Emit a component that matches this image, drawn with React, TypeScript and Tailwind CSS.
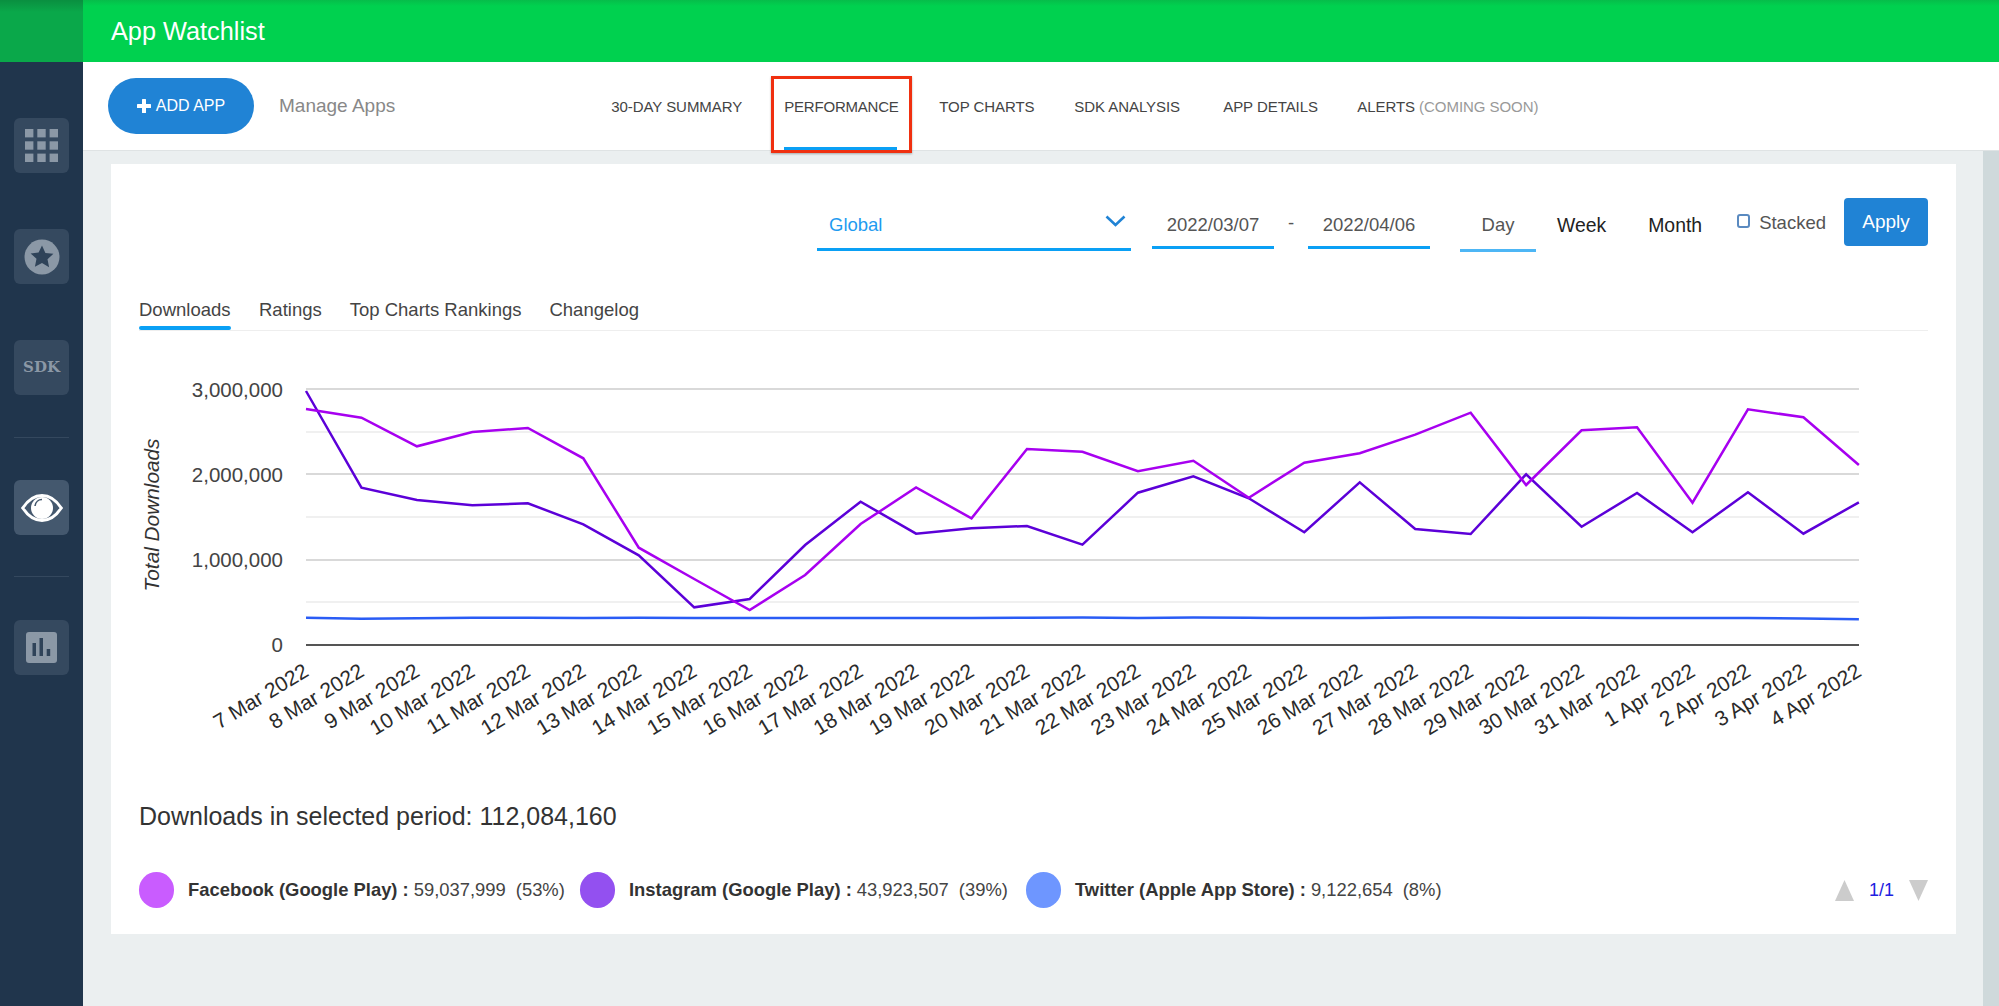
import React from "react";

const font = { fontFamily: '"Liberation Sans", Arial, sans-serif' };

const STEP = 55.46;
const pink = [409, 417.7, 446.3, 432, 428, 458.3, 547.7, 579, 610, 575, 524, 487.5, 518.3, 449, 451.7, 471.3, 460.7, 497.7, 462.7, 453.3, 434.7, 412.7, 485, 430.3, 427.3, 502.7, 409.3, 417.3, 465];
const purple = [391, 487.7, 500, 505.3, 503.3, 524.3, 555.3, 607.3, 599, 545, 501.7, 533.7, 528.3, 526, 544.7, 492.7, 476.3, 498.3, 532.3, 482.3, 529, 534, 474.3, 526.7, 493, 532.3, 492.3, 533.7, 502.3];
const blue = [617.7, 618.7, 618.2, 617.7, 617.7, 617.9, 617.7, 618, 618, 618, 618, 618, 618, 617.7, 617.5, 618, 617.6, 617.8, 618, 618, 617.6, 617.6, 617.7, 617.7, 618, 618, 618, 618.4, 619.3];
const days = ["7 Mar 2022", "8 Mar 2022", "9 Mar 2022", "10 Mar 2022", "11 Mar 2022", "12 Mar 2022", "13 Mar 2022", "14 Mar 2022", "15 Mar 2022", "16 Mar 2022", "17 Mar 2022", "18 Mar 2022", "19 Mar 2022", "20 Mar 2022", "21 Mar 2022", "22 Mar 2022", "23 Mar 2022", "24 Mar 2022", "25 Mar 2022", "26 Mar 2022", "27 Mar 2022", "28 Mar 2022", "29 Mar 2022", "30 Mar 2022", "31 Mar 2022", "1 Apr 2022", "2 Apr 2022", "3 Apr 2022", "4 Apr 2022"];

const pts = (a: number[]) => a.map((y, i) => `${306 + i * STEP},${y}`).join(" ");

function Chart() {
  return (
    <svg width={1845} height={420} viewBox="111 360 1845 420" className="block shrink-0" style={font}>
      <text transform="translate(159 515) rotate(-90)" textAnchor="middle" fontSize="20.8" fontStyle="italic" fill="#333">Total Downloads</text>
      {[432, 517, 602].map((y) => (
        <line key={y} x1="306" x2="1859" y1={y} y2={y} stroke="#f0f0f0" strokeWidth="2" />
      ))}
      {[389, 474, 560].map((y) => (
        <line key={y} x1="306" x2="1859" y1={y} y2={y} stroke="#d9d9d9" strokeWidth="2" />
      ))}
      <line x1="306" x2="1859" y1="645" y2="645" stroke="#555" strokeWidth="2" />
      {[["3,000,000", 397], ["2,000,000", 481.500], ["1,000,000", 567], ["0", 652]].map(([t, y]) => (
        <text key={t} x="283" y={y} textAnchor="end" fontSize="20.5" fill="#444">{t}</text>
      ))}
      {days.map((d, i) => (
        <text key={d} transform={`translate(${306 + i * STEP + 4} 675) rotate(-31)`} textAnchor="end" fontSize="21" fill="#2a2a2a">{d}</text>
      ))}
      <polyline points={pts(blue)} fill="none" stroke="#2a5cf5" strokeWidth="2.5" />
      <polyline points={pts(purple)} fill="none" stroke="#5c00d8" strokeWidth="2.5" />
      <polyline points={pts(pink)} fill="none" stroke="#a700f0" strokeWidth="2.5" />
    </svg>
  );
}

function Side({ active, children }: { active?: boolean; children: React.ReactNode }) {
  return (
    <div className={`w-[55px] h-[55px] rounded-md flex items-center justify-center ${active ? "bg-[#44586e]" : "bg-[#35495f]"}`}>
      {children}
    </div>
  );
}

function Sidebar() {
  return (
    <div className="w-[83px] shrink-0 bg-[#20354c] flex flex-col">
      <div className="h-[62px] bg-[linear-gradient(#0a8f40,#0aa84a_12px,#0aa84a)]" />
      <div className="flex flex-col items-center pt-[56px]">
        <Side>
          <svg width="33" height="33" viewBox="0 0 33 33" fill="#8b98a6">
            {[0, 12.3, 24.6].flatMap((y) => [0, 12.3, 24.6].map((x) => <rect key={`${x}-${y}`} x={x} y={y} width="8.4" height="8.4" />))}
          </svg>
        </Side>
        <div className="h-[56px]" />
        <Side>
          <svg width="36" height="36" viewBox="0 0 36 36">
            <circle cx="18" cy="18" r="17.5" fill="#8b98a6" />
            <path d="M18 6.5l3.4 7.4 8 .9-5.9 5.4 1.6 8L18 24l-7.1 3.8 1.6-8-5.9-5.4 8-.9z" fill="#2f4359" />
          </svg>
        </Side>
        <div className="h-[56px]" />
        <Side>
          <span className="text-[#8b98a6] text-[15px] font-bold" style={{ fontFamily: '"DejaVu Serif", serif' }}>SDK</span>
        </Side>
        <div className="h-[43px] w-[55px] flex items-end"><div className="w-full h-px bg-[#34485e]" /></div>
        <div className="h-[42px]" />
        <Side active>
          <svg width="42" height="28" viewBox="0 0 42 28">
            <path d="M1.7 14C7 6 13.500 1.500 21 1.500S35 6 40.300 14C35 22 28.500 26.500 21 26.500S7 22 1.700 14z" fill="none" stroke="#fff" strokeWidth="3" />
            <circle cx="21" cy="14" r="11" fill="#fff" />
            <path d="M14 12c.5-4 3.500-6.500 7-6.500" fill="none" stroke="#44586e" strokeWidth="1.6" />
          </svg>
        </Side>
        <div className="h-[42px] w-[55px] flex items-end"><div className="w-full h-px bg-[#34485e]" /></div>
        <div className="h-[43px]" />
        <Side>
          <svg width="31" height="31" viewBox="0 0 31 31">
            <rect width="31" height="31" rx="3" fill="#8b98a6" />
            <rect x="6.500" y="11" width="3.500" height="13" fill="#2f4359" />
            <rect x="13.500" y="6" width="3.500" height="18" fill="#2f4359" />
            <rect x="20.700" y="17" width="3.500" height="7" fill="#2f4359" />
          </svg>
        </Side>
      </div>
    </div>
  );
}

function Nav() {
  return (
    <div className="h-[89px] bg-white border-b border-[#dfe3e4] flex items-center relative shrink-0">
      <div className="ml-[25px] w-[146px] h-[56px] rounded-[28px] bg-[#2083d5] text-white text-[16px] flex items-center justify-center gap-[5px]">
        <svg width="14" height="14" viewBox="0 0 14 14" fill="#fff"><rect x="5" width="4" height="14" rx="0.500" /><rect y="5" width="14" height="4" rx="0.500" /></svg>
        <span>ADD APP</span>
      </div>
      <span className="ml-[25px] mt-[1px] text-[19px] text-[#888]">Manage Apps</span>
      <div className="ml-[216px] h-full flex items-center text-[15px] tracking-[-0.05px] text-[#444]">
        <span className="w-[131px] mt-[3px] whitespace-nowrap">30-DAY SUMMARY</span>
        <span className="ml-[42px] w-[113px] h-full flex items-center relative whitespace-nowrap">
          <span className="mt-[3px] tracking-[-0.2px]">PERFORMANCE</span>
          <span className="absolute left-0 right-0 bottom-0 h-[3px] bg-[#0aa0f5]" />
        </span>
        <span className="ml-[42px] w-[94px] mt-[3px] whitespace-nowrap">TOP CHARTS</span>
        <span className="ml-[41px] w-[107px] mt-[3px] whitespace-nowrap">SDK ANALYSIS</span>
        <span className="ml-[42px] w-[92px] mt-[3px] whitespace-nowrap">APP DETAILS</span>
        <span className="ml-[42px] mt-[3px] whitespace-nowrap">ALERTS <span className="text-[#999]">(COMING SOON)</span></span>
      </div>
      <div className="absolute left-[688px] top-[14px] w-[141px] h-[77px] border-[3px] border-[#f03010] shadow-[0_1px_2px_rgba(0,0,0,0.3)]" />
    </div>
  );
}

function Filters() {
  return (
    <div className="h-[88px] shrink-0 flex text-[18.500px] text-[#555]">
      <div className="ml-[706px] mt-[34px] w-[314px] h-[53px] border-b-[3px] border-[#0aa0f5] pl-[12px] flex relative">
        <span className="text-[#1e9bf0] mt-[13px]">Global</span>
        <svg className="absolute left-[288px] top-[17px]" width="21" height="12" viewBox="0 0 21 12" fill="none" stroke="#2083d5" strokeWidth="2.600"><path d="M1.500 1.500l9 8.500 9-8.500" /></svg>
      </div>
      <div className="ml-[21px] mt-[34px] w-[122px] h-[51px] border-b-[3px] border-[#0aa0f5] flex justify-center pt-[13px]">2022/03/07</div>
      <div className="w-[34px] mt-[45px] text-center">-</div>
      <div className="mt-[34px] w-[122px] h-[51px] border-b-[3px] border-[#0aa0f5] flex justify-center pt-[13px]">2022/04/06</div>
      <div className="ml-[30px] mt-[34px] w-[76px] h-[54px] border-b-[3px] border-[#4db6f5] flex justify-center pt-[13px]">Day</div>
      <div className="ml-[21px] mt-[47px] text-[19.400px] text-[#222]">Week</div>
      <div className="ml-[42px] mt-[47px] text-[19.400px] text-[#222]">Month</div>
      <div className="ml-[35px] mt-[50px] w-[13px] h-[14px] rounded-[3px] border-2 border-[#5a8ac0]" />
      <div className="ml-[9px] mt-[45px]">Stacked</div>
      <div className="ml-[18px] mt-[34px] w-[84px] h-[48px] rounded bg-[#2083d5] text-white text-[19px] flex items-center justify-center">Apply</div>
    </div>
  );
}

function Tabs() {
  return (
    <div className="mx-[28px] mt-[53px] h-[26px] border-b border-[#eee] flex text-[18.500px] leading-[20px] text-[#444] shrink-0">
      <div className="w-[92px] h-[25px] relative whitespace-nowrap -mt-[5px]">Downloads
        <span className="absolute left-0 right-0 top-[26px] h-[4px] rounded-sm bg-[#0aa0f5]" />
      </div>
      <div className="ml-[28px] -mt-[5px]">Ratings</div>
      <div className="ml-[28px] -mt-[5px]">Top Charts Rankings</div>
      <div className="ml-[28px] -mt-[5px]">Changelog</div>
    </div>
  );
}

function LegendItem({ color, name, num, pct, w }: { color: string; name: string; num: string; pct: string; w: string }) {
  return (
    <div className={`flex items-center text-[18.400px] whitespace-nowrap ${w}`}>
      <span className="w-[35px] h-[36px] rounded-full shrink-0" style={{ backgroundColor: color }} />
      <span className="ml-[14px] font-bold text-[#333]">{name}</span>
      <span className="ml-[5px] text-[#444]">{num}</span>
      <span className="ml-[10px] text-[#444]">{pct}</span>
    </div>
  );
}

export default function App() {
  return (
    <div className="flex w-[1999px] h-[1006px] overflow-hidden bg-[#ebeff0]" style={font}>
      <Sidebar />
      <div className="flex-1 flex flex-col min-w-0">
        <div className="h-[62px] bg-[linear-gradient(#06bd4a,#00d14f_6px,#00d14f)] shrink-0 flex items-center pl-[28px] pt-[2px] text-white text-[25.300px]">App Watchlist</div>
        <Nav />
        <div className="flex-1 flex min-h-0">
          <div className="ml-[28px] mt-[13px] w-[1845px] h-[770px] bg-white flex flex-col">
            <Filters />
            <Tabs />
            <div className="mt-[29px]"><Chart /></div>
            <div className="mt-[21px] ml-[28px] text-[25px] leading-[30px] text-[#333] shrink-0">Downloads in selected period: 112,084,160</div>
            <div className="mt-[41px] mx-[28px] flex items-center">
              <LegendItem color="#c95cff" name="Facebook (Google Play) :" num="59,037,999" pct="(53%)" w="w-[441px]" />
              <LegendItem color="#9350f0" name="Instagram (Google Play) :" num="43,923,507" pct="(39%)" w="w-[446px]" />
              <LegendItem color="#6e96ff" name="Twitter (Apple App Store) :" num="9,122,654" pct="(8%)" w="" />
              <div className="ml-auto flex items-center">
                <svg width="19" height="21" viewBox="0 0 19 21"><path d="M9.500 0L19 21H0z" fill="#ccc" /></svg>
                <span className="mx-[15px] text-[#2020e0] text-[18px]">1/1</span>
                <svg width="19" height="21" viewBox="0 0 19 21"><path d="M0 0h19L9.500 21z" fill="#ccc" /></svg>
              </div>
            </div>
          </div>
          <div className="ml-auto w-[16px] bg-[#cfd9db]" />
        </div>
      </div>
    </div>
  );
}
